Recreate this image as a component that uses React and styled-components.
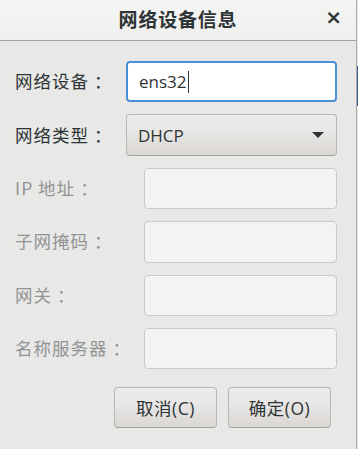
import React from 'react'
import styled, { createGlobalStyle } from 'styled-components'

const GlobalStyle = createGlobalStyle`
  html, body {
    margin: 0;
    padding: 0;
    background: #e8e8e7;
  }
  body {
    font-family: 'Open Sans', 'Noto Sans CJK SC', sans-serif;
    color: #2e3436;
  }
`

const fields = [
  { label: '网络设备', kind: 'entry', value: 'ens32' },
  { label: '网络类型', kind: 'combo', value: 'DHCP' },
  { label: 'IP 地址', kind: 'disabled' },
  { label: '子网掩码', kind: 'disabled' },
  { label: '网关', kind: 'disabled' },
  { label: '名称服务器', kind: 'disabled' },
]

const App = () => (
  <Page>
    <GlobalStyle />
    <Dialog>
      <Header>
        <Title>网络设备信息</Title>
        <Close>×</Close>
      </Header>
      <Body>
        <Rows>
          {fields.map(f => (
            <Row key={f.label} $wide={f.kind === 'disabled'}>
              <Label $disabled={f.kind === 'disabled'}>
                {f.label}
                <Colon>：</Colon>
              </Label>
              {f.kind === 'entry' && (
                <Entry>
                  {f.value}
                  <Caret />
                </Entry>
              )}
              {f.kind === 'combo' && (
                <Combo>
                  {f.value}
                  <Arrow />
                </Combo>
              )}
              {f.kind === 'disabled' && <Entry $disabled />}
            </Row>
          ))}
        </Rows>
        <Actions>
          <Button>取消(C)</Button>
          <Button>确定(O)</Button>
        </Actions>
      </Body>
    </Dialog>
    <Edge>
      <EdgeMark />
    </Edge>
  </Page>
)

const Page = styled.div`
  display: flex;
  width: 358px;
  height: 449px;
  overflow: hidden;
`

const Dialog = styled.div`
  width: 356px;
  border-right: 1px solid #a9a9a7;
  background: #e8e8e7;
  display: flex;
  flex-direction: column;
`

const Header = styled.div`
  height: 40px;
  border-bottom: 1px solid #a3a3a1;
  background: linear-gradient(to bottom, #f5f5f4, #efefee);
  display: flex;
  align-items: center;
  justify-content: center;
  position: relative;
`

const Title = styled.div`
  font-family: 'Noto Sans CJK SC', sans-serif;
  font-weight: bold;
  font-size: 19px;
  letter-spacing: 0.8px;
  color: #2e3436;
  margin-left: 0;
  margin-top: -4px;
`

const Close = styled.div`
  position: absolute;
  right: 14px;
  top: 5px;
  font-family: 'DejaVu Sans', sans-serif;
  font-weight: bold;
  font-size: 20px;
  color: #2e3436;
`

const Body = styled.div`
  padding: 20px 19px 0 15px;
  display: flex;
  flex-direction: column;
`

const Rows = styled.div`
  display: flex;
  flex-direction: column;
  gap: 12px;
`

const Row = styled.div`
  display: grid;
  grid-template-columns: ${p => (p.$wide ? '129px' : '111px')} 1fr;
  align-items: center;
  height: 41.4px;
`

const Label = styled.div`
  font-family: 'Noto Sans CJK SC', sans-serif;
  font-size: 17.5px;
  letter-spacing: 1px;
  white-space: nowrap;
  color: ${p => (p.$disabled ? '#929494' : '#2e3436')};
  margin-top: -2px;
`

const Colon = styled.span`
  margin-left: 5px;
`

const Entry = styled.div`
  box-sizing: border-box;
  height: 100%;
  display: flex;
  align-items: center;
  padding-left: 11px;
  font-size: 17px;
  color: #2e3436;
  border-radius: 4px;
  background: ${p => (p.$disabled ? '#f3f3f2' : '#ffffff')};
  border: ${p => (p.$disabled ? '1px solid #c9c9c6' : '2px solid #4a90d9')};
`

const Caret = styled.span`
  display: inline-block;
  width: 1px;
  height: 22px;
  background: #2e3436;
  margin-left: 1px;
`

const Combo = styled.div`
  box-sizing: border-box;
  height: 100%;
  display: flex;
  align-items: center;
  justify-content: space-between;
  padding: 0 12px 0 11px;
  font-size: 17px;
  color: #2e3436;
  border: 1px solid #b6b6b3;
  border-bottom-color: #a1a1a1;
  border-radius: 4px;
  background: linear-gradient(to top, #dad7d3, #e8e7e6 60%, #edecea);
`

const Arrow = styled.span`
  width: 0;
  height: 0;
  border-left: 6px solid transparent;
  border-right: 6px solid transparent;
  border-top: 6px solid #2e3436;
`

const Actions = styled.div`
  display: flex;
  justify-content: flex-end;
  gap: 11px;
  margin-top: 18px;
  padding-right: 6px;
`

const Button = styled.button`
  width: 103px;
  height: 41px;
  padding: 0;
  font-family: 'Open Sans', 'Noto Sans CJK SC', sans-serif;
  font-size: 17.5px;
  letter-spacing: 0.5px;
  color: #2e3436;
  border: 1px solid #b6b6b3;
  border-bottom-color: #a1a1a1;
  border-radius: 4px;
  background: linear-gradient(to top, #dad7d3, #e8e7e6 60%, #edecea);
`

const Edge = styled.div`
  flex: 1;
  background: #e8e8e7;
  padding-top: 66px;
`

const EdgeMark = styled.div`
  height: 40px;
  background: #3d6699;
`

export default App
